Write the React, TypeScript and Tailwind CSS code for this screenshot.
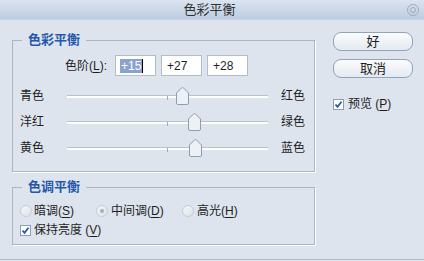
const sliders = [
  { left: "青色", right: "红色", value: 15 },
  { left: "洋红", right: "绿色", value: 27 },
  { left: "黄色", right: "蓝色", value: 28 },
];

const Thumb = ({ value }: { value: number }) => (
  <svg
    className="absolute top-[-8px]"
    style={{ left: 100 + value - 6 }}
    width="13"
    height="18"
    viewBox="0 0 13 18"
  >
    <path
      d="M0.5 6 L5.5 1 Q6.5 0 7.5 1 L12.5 6 V16 Q12.5 17.5 11 17.5 H2 Q0.5 17.5 0.5 16 Z"
      fill="#edf1f5"
      stroke="#8d9db2"
    />
  </svg>
);

const Radio = ({ checked }: { checked?: boolean }) => (
  <span className="w-[12px] h-[12px] rounded-full border border-[#c5ccd6] bg-gradient-to-br from-[#f4f6f9] to-[#dfe4ea] flex items-center justify-center">
    {checked && <span className="w-[4px] h-[4px] rounded-full bg-[#a3b0c2]" />}
  </span>
);

const Check = () => (
  <span className="w-[11px] h-[11px] border border-[#8aa0b8] bg-white flex items-center justify-center">
    <svg width="9" height="9" viewBox="0 0 9 9">
      <path d="M1.5 4.5 L3.5 6.8 L7.5 1.8" fill="none" stroke="#2459a8" strokeWidth="1.8" />
    </svg>
  </span>
);

const U = ({ c }: { c: string }) => <span className="underline underline-offset-2">{c}</span>;

const App = () => {
  return (
    <div className="w-[424px] h-[261px] bg-[#dde4ed] flex flex-col font-['Liberation_Sans','Noto_Sans_CJK_SC',sans-serif] text-[12px] leading-[16px] text-[#1e1e1e]">
      <div className="h-[20px] bg-gradient-to-b from-[#dbe4ef] to-[#bccde1] flex items-center border-b border-[#c9d5e3]">
        <span className="flex-1 text-center pl-[12px] text-[13px] text-[#303030]">色彩平衡</span>
        <span className="w-[12px] h-[12px] mr-[5px] rounded-full border border-[#9eabbb] flex items-center justify-center">
          <span className="w-[6px] h-[6px] rounded-full border border-[#9eabbb]" />
        </span>
      </div>

      <div className="flex flex-1">
        <div className="pl-[12px] pt-[12px] w-[315px]">
          <fieldset className="w-[303px] border border-[#aab6c4] shadow-[1px_1px_0_#fff]">
            <legend className="ml-[9px] px-[6px] text-[13px] leading-[16px] font-bold text-[#2457ab]">
              色彩平衡
            </legend>
            <div className="pt-[7px] pb-[10px] pl-[7px]">
              <div className="flex items-center h-[21px]">
                <span className="ml-[45px] w-[50px]">
                  色阶(<U c="L" />):
                </span>
                <div className="flex gap-[5px]">
                  <div className="w-[41px] h-[21px] bg-white border border-[#b1bdcb] flex items-center pl-[4px]">
                    <span className="bg-[#8aa3cc] text-white px-[1px] leading-[14px]">+15</span>
                    <span className="w-px h-[14px] bg-black" />
                  </div>
                  <div className="w-[41px] h-[21px] bg-white border border-[#b1bdcb] flex items-center pl-[5px]">
                    +27
                  </div>
                  <div className="w-[41px] h-[21px] bg-white border border-[#b1bdcb] flex items-center pl-[5px]">
                    +28
                  </div>
                </div>
              </div>
              <div className="mt-[7px] flex flex-col">
                {sliders.map((s) => (
                  <div key={s.left} className="h-[26px] flex items-center">
                    <span className="w-[47px]">{s.left}</span>
                    <div className="w-[201px] relative">
                      <div className="h-[3px] bg-white border-t border-[#b8c2cd]" />
                      <div className="absolute left-[100px] top-[1px] w-px h-[4px] bg-[#a0abb8]" />
                      <Thumb value={s.value} />
                    </div>
                    <span className="ml-[13px]">{s.right}</span>
                  </div>
                ))}
              </div>
            </div>
          </fieldset>

          <fieldset className="mt-[7px] w-[303px] border border-[#aab6c4] shadow-[1px_1px_0_#fff]">
            <legend className="ml-[9px] px-[6px] text-[13px] leading-[16px] font-bold text-[#2457ab]">
              色调平衡
            </legend>
            <div className="pt-[7px] pb-[5px] pl-[7px]">
              <div className="h-[18px] flex items-center">
                <div className="w-[76px] flex items-center gap-[2px]">
                  <Radio />
                  <span>
                    暗调(<U c="S" />)
                  </span>
                </div>
                <div className="w-[86px] flex items-center gap-[3px]">
                  <Radio checked />
                  <span>
                    中间调(<U c="D" />)
                  </span>
                </div>
                <div className="flex items-center gap-[3px]">
                  <Radio />
                  <span>
                    高光(<U c="H" />)
                  </span>
                </div>
              </div>
              <div className="mt-px h-[18px] flex items-center gap-[3px]">
                <Check />
                <span>
                  保持亮度 (<U c="V" />)
                </span>
              </div>
            </div>
          </fieldset>
        </div>

        <div className="ml-[18px] pt-[12px] flex flex-col">
          <button className="w-[80px] h-[19px] rounded-[8px] border border-[#91a4bb] bg-gradient-to-b from-[#fbfcfd] to-[#e4eaf1] text-[13px] leading-[17px]">
            好
          </button>
          <button className="mt-[8px] w-[80px] h-[19px] rounded-[8px] border border-[#91a4bb] bg-gradient-to-b from-[#fbfcfd] to-[#e4eaf1] text-[13px] leading-[17px]">
            取消
          </button>
          <div className="mt-[18px] flex items-center gap-[4px]">
            <Check />
            <span>
              预览 (<U c="P" />)
            </span>
          </div>
        </div>
      </div>

      <div className="h-px bg-[#aebbca]" />
      <div className="h-px" />
    </div>
  );
};

export default App;
